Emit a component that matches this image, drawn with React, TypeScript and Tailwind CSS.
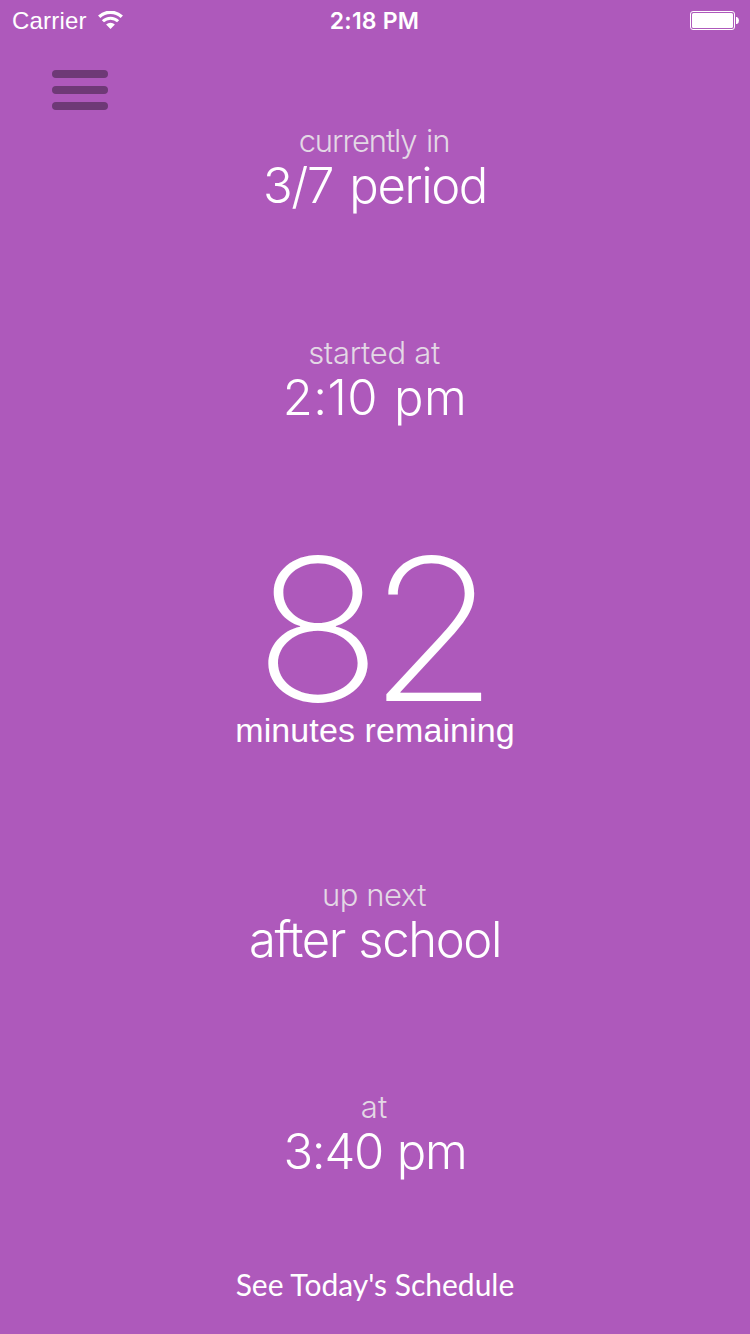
import React from "react";

function StatusBar() {
  return (
    <header className="grid h-10 grid-cols-3 items-center pl-3 pr-[11px]">
      <div className="flex items-center gap-[11px]">
        <span className="font-['Liberation_Sans',sans-serif] text-[24px] leading-[42px] tracking-[0.2px]">Carrier</span>
        <svg className="mb-0.5 h-[18px] w-[25px]" viewBox="0 0 25 18" fill="none" stroke="white">
          <path d="M1.2 5.8A16.3 16.3 0 0 1 23.8 5.8" strokeWidth="3.3" />
          <path d="M4.9 10.3A10.8 10.8 0 0 1 20.1 10.3" strokeWidth="3" />
          <path d="M12.5 18L8.1 13.6A6.2 6.2 0 0 1 16.9 13.6Z" fill="white" stroke="none" />
        </svg>
      </div>
      <span className="pr-0.5 text-center font-['Inter',sans-serif] text-[23px] font-semibold leading-[42px] tracking-[0.2px]">2:18 PM</span>
      <svg className="mb-0.5 h-[20px] w-[50px] justify-self-end" viewBox="0 0 50 20">
        <rect x="1.5" y="1.5" width="44" height="18" rx="2.5" fill="none" stroke="white" />
        <rect x="3" y="3" width="41" height="15" rx="1.5" fill="white" />
        <path d="M47 7h1q2 1 2 3.5T48 14h-1z" fill="white" />
      </svg>
    </header>
  );
}

function MenuButton() {
  return (
    <button aria-label="Menu" className="ml-[52px] mt-[30px] flex w-14 flex-col gap-2">
      <span className="h-2 rounded-full bg-[#6e3976]" />
      <span className="h-2 rounded-full bg-[#6e3976]" />
      <span className="h-2 rounded-full bg-[#6e3976]" />
    </button>
  );
}

type InfoProps = { label: string; value: string; labelClass?: string; valueClass?: string };

function Info({ label, value, labelClass = "", valueClass = "" }: InfoProps) {
  return (
    <section className="flex h-[90px] flex-col items-center">
      <p className={`h-[38px] pr-0.5 text-[31px] font-light leading-[38px] text-[#e3d8e5] ${labelClass}`}>{label}</p>
      <p className={`h-[52px] text-[49px] font-light leading-[52px] ${valueClass}`}>{value}</p>
    </section>
  );
}

export default function App() {
  return (
    <div className="flex h-[1334px] w-[750px] flex-col overflow-hidden bg-[#ae59bb] font-['Inter',sans-serif] text-white">
      <StatusBar />
      <MenuButton />
      <main className="mt-3 flex flex-col whitespace-nowrap text-center">
        <Info label="currently in" value="3/7 period" labelClass="tracking-[-1.1px] [word-spacing:2px]" valueClass="tracking-[-1.4px] [word-spacing:4px]" />
        <div className="h-[122px]" />
        <Info label="started at" value="2:10 pm" labelClass="tracking-[-0.3px]" valueClass="tracking-[0.4px] [word-spacing:2px]" />
        <section className="mt-[128px] flex flex-col items-center">
          <p className="h-[154px] scale-x-[1.07] pr-[11px] text-[198px] font-extralight leading-[155px] tracking-[-13px]">82</p>
          <p className="h-12 font-['Liberation_Sans',sans-serif] text-[34px] leading-[48px] tracking-[0.1px]">minutes remaining</p>
        </section>
        <div className="h-[122px]" />
        <Info label="up next" value="after school" labelClass="tracking-[-0.5px]" valueClass="tracking-[-1.4px] [word-spacing:1px]" />
        <div className="h-[122px]" />
        <Info label="at" value="3:40 pm" valueClass="tracking-[-1.2px] [word-spacing:1px]" />
        <button className="mt-[88px] font-['Lato',sans-serif] text-[30px] leading-9">See Today's Schedule</button>
      </main>
    </div>
  );
}
